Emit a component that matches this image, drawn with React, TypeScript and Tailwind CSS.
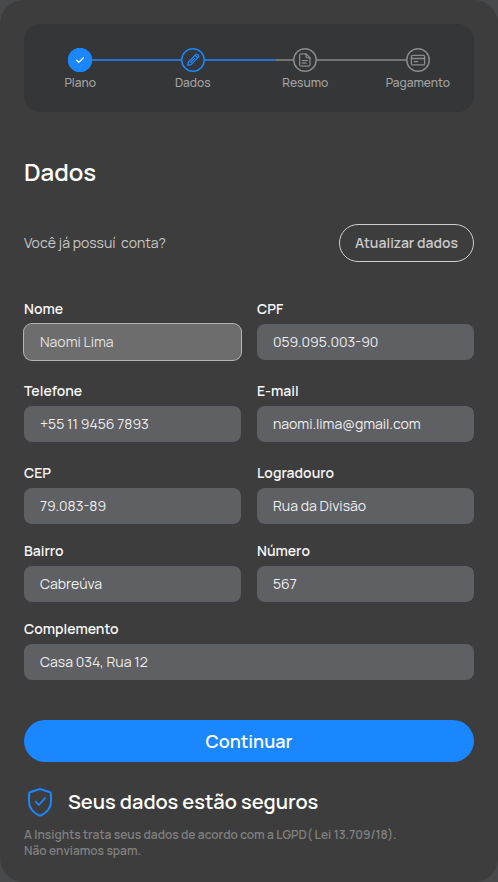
import { useState } from "react";
import type { ReactNode } from "react";

type Step = {
  label: string;
  color: string;
  before: ReactNode;
  after: ReactNode;
  icon: ReactNode;
};

const blueLine = <span className="h-0.5 flex-1 bg-[#2474cf]" />;
const grayLine = <span className="h-0.5 flex-1 bg-[#757576]" />;
const noLine = <span className="h-0.5 flex-1" />;
const mixedLine = (
  <span className="flex h-0.5 flex-1">
    <span className="w-3/5 bg-[#2474cf]" />
    <span className="flex-1 bg-[#757576]" />
  </span>
);

function StepIcon({ children }: { children: ReactNode }) {
  return (
    <svg viewBox="0 0 24 24" className="size-6 shrink-0" fill="none" stroke="currentColor" strokeWidth="1.3" strokeLinecap="round" strokeLinejoin="round">
      <circle cx="12" cy="12" r="11.25" strokeWidth="1.5" />
      {children}
    </svg>
  );
}

const checkIcon = (
  <StepIcon>
    <circle cx="12" cy="12" r="11.5" fill="currentColor" />
    <path d="M8.7 12.3l2.1 2.1 4.600-4.700" stroke="#fff" />
  </StepIcon>
);

const pencilIcon = (
  <StepIcon>
    <path d="M6.700 17.300l.7-3.300 7.500-7.500c.5-.5 1.200-.5 1.700 0l.9.9c.5.5.5 1.200 0 1.700L10 16.600z" />
    <path d="M14.200 7.500l2.300 2.300M9.800 14.200l3.600-3.600" />
  </StepIcon>
);

const documentIcon = (
  <StepIcon>
    <path d="M8.200 5.800h4.800l4 4v6.800a1.500 1.500 0 0 1-1.500 1.500H8.200a1.500 1.500 0 0 1-1.500-1.500V7.300A1.500 1.500 0 0 1 8.200 5.800z" />
    <path d="M13 5.800v2.500A1.500 1.500 0 0 0 14.500 9.800H17" />
    <path d="M9.300 12.600h5M9.300 15.200h3.800" />
  </StepIcon>
);

const cardIcon = (
  <StepIcon>
    <rect x="5.400" y="7.300" width="13.200" height="9.600" rx="1.200" />
    <path d="M5.400 10.500h13.200M8.200 13.600h3.600" />
  </StepIcon>
);

function ShieldIcon() {
  return (
    <svg viewBox="0 0 32 32" className="size-8 shrink-0" fill="none" stroke="#1a87ff" strokeWidth="2" strokeLinecap="round" strokeLinejoin="round">
      <path d="M16 3L26 6.300q1 .4 1 1.500v7.700c0 6.800-4.600 11.100-9.800 13.800q-1.200.6-2.400 0C9.600 26.600 5 22.300 5 15.500V7.800q0-1.100 1-1.500z" />
      <path d="M11.600 15.700l3.300 3.100 6.200-6.600" strokeWidth="1.700" />
    </svg>
  );
}

const steps: Step[] = [
  { label: "Plano", color: "text-[#1a87ff]", before: noLine, after: blueLine, icon: checkIcon },
  { label: "Dados", color: "text-[#1a87ff]", before: blueLine, after: blueLine, icon: pencilIcon },
  { label: "Resumo", color: "text-[#8a8a8b]", before: mixedLine, after: grayLine, icon: documentIcon },
  { label: "Pagamento", color: "text-[#8a8a8b]", before: grayLine, after: noLine, icon: cardIcon },
];

function Field({ id, label, initial, active = false }: { id: string; label: string; initial: string; active?: boolean }) {
  const [value, setValue] = useState(initial);
  return (
    <div className="flex min-w-0 flex-col gap-1.5">
      <label htmlFor={id} className="text-sm leading-[18px] font-semibold text-[#f5f5f5]">
        {label}
      </label>
      <input
        id={id}
        value={value}
        onChange={(e) => setValue(e.target.value)}
        className={
          active
            ? "h-9 w-full rounded-lg bg-[#6d6d6d] px-4 pb-0.5 text-sm font-normal text-[#e0e0e0] ring-1 ring-[#b4b4b4] outline-none"
            : "h-9 w-full rounded-lg bg-[#5f6064] px-4 pb-0.5 text-sm font-normal text-[#eeeeee] outline-none focus:ring-1 focus:ring-[#b4b4b4]"
        }
      />
    </div>
  );
}

export default function App() {
  return (
    <div className="min-h-screen bg-[#48494a] font-[Manrope,Inter,sans-serif]">
      <main className="min-h-screen rounded-3xl bg-[#3d3d3d] px-6 pt-6 pb-5">
        <nav aria-label="Etapas" className="rounded-2xl bg-[#353637] pt-6 pb-5">
          <ol className="grid grid-cols-4">
            {steps.map((step) => (
              <li key={step.label} className="flex flex-col items-center">
                <div className="flex w-full items-center">
                  {step.before}
                  <span className={step.color}>{step.icon}</span>
                  {step.after}
                </div>
                <span className="mt-0.5 text-xs leading-[18px] font-medium text-[#a4a4a4]">{step.label}</span>
              </li>
            ))}
          </ol>
        </nav>

        <h1 className="mt-11 text-2xl font-semibold text-white">Dados</h1>

        <div className="mt-9 flex items-center justify-between">
          <p className="text-sm font-normal whitespace-pre text-[#c8c8c8]">{"Você já possuí  conta?"}</p>
          <button type="button" className="h-[38px] rounded-full border border-[#cfcfcf] px-[15px] text-sm font-semibold text-[#cacaca]">
            Atualizar dados
          </button>
        </div>

        <form onSubmit={(e) => e.preventDefault()} className="mt-[38px]">
          <div className="grid grid-cols-2 gap-x-4 gap-y-[22px]">
            <Field id="nome" label="Nome" initial="Naomi Lima" active />
            <Field id="cpf" label="CPF" initial="059.095.003-90" />
            <Field id="telefone" label="Telefone" initial="+55 11 9456 7893" />
            <Field id="email" label="E-mail" initial="naomi.lima@gmail.com" />
            <Field id="cep" label="CEP" initial="79.083-89" />
            <Field id="logradouro" label="Logradouro" initial="Rua da Divisão" />
          </div>
          <div className="mt-[18px] grid grid-cols-2 gap-x-4 gap-y-[18px]">
            <Field id="bairro" label="Bairro" initial="Cabreúva" />
            <Field id="numero" label="Número" initial="567" />
            <div className="col-span-2">
              <Field id="complemento" label="Complemento" initial="Casa 034, Rua 12" />
            </div>
          </div>
          <button type="submit" className="mt-10 h-[42px] w-full rounded-full bg-[#1a87ff] text-lg font-semibold text-white">
            Continuar
          </button>
        </form>

        <div className="mt-6 flex items-center gap-3">
          <ShieldIcon />
          <h2 className="text-xl font-semibold text-white">Seus dados estão seguros</h2>
        </div>
        <p className="mt-[9px] text-xs font-semibold text-[#808080]">
          A Insights trata seus dados de acordo com a LGPD( Lei 13.709/18).
          <br />
          Não enviamos spam.
        </p>
      </main>
    </div>
  );
}
